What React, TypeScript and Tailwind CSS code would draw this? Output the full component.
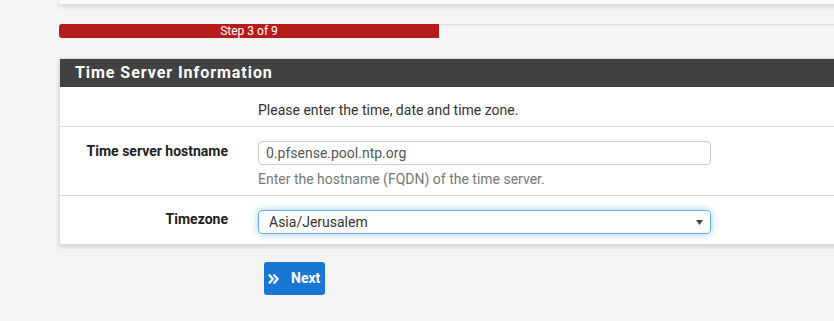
export default function App() {
  return (
    <div className="w-[834px] h-[321px] overflow-hidden bg-[#f4f4f4] font-['Roboto',sans-serif] text-[#333]">
      {/* top panel remnant */}
      <div className="ml-[59px] w-[1140px] h-[4px] bg-[#f9f9f9] shadow-[0_2px_5px_rgba(0,0,0,0.18)]" />

      {/* progress */}
      <div className="ml-[59px] mt-[20px] w-[1140px] h-[14px] rounded-[3px] bg-[#f5f5f5] shadow-[inset_0_1px_2px_rgba(0,0,0,0.1)] overflow-hidden">
        <div className="w-[380px] h-full bg-[#b71c1c] text-white text-[12px] leading-[14px] text-center">
          Step 3 of 9
        </div>
      </div>

      {/* panel */}
      <div className="ml-[59px] mt-[20px] w-[1140px] border border-[#ddd] bg-white shadow-[0_2px_4px_rgba(0,0,0,0.15)]">
        <div className="h-[28px] bg-[#424242] px-[15px] text-white font-bold text-[16px] leading-[28px] tracking-[0.95px]">
          Time Server Information
        </div>

        <div className="flex h-[40px] border-b border-[#ddd]">
          <div className="w-[183px] shrink-0" />
          <div className="ml-[15px] pt-[13px] text-[14px] leading-[20px] text-[#333]">
            Please enter the time, date and time zone.
          </div>
        </div>

        <div className="flex h-[69px] border-b border-[#ddd]">
          <div className="w-[183px] shrink-0 pr-[15px] pt-[14px] text-right text-[14px] leading-[20px] font-bold text-[#212121]">
            Time server hostname
          </div>
          <div className="ml-[15px] pt-[14px]">
            <div className="w-[453px] h-[24px] border border-[#ccc] rounded-[4px] px-[7px] text-[14px] leading-[22px] text-[#555]">
              0.pfsense.pool.ntp.org
            </div>
            <div className="mt-[5px] text-[14px] leading-[18px] text-[#777]">
              Enter the hostname (FQDN) of the time server.
            </div>
          </div>
        </div>

        <div className="flex h-[48px]">
          <div className="w-[183px] shrink-0 pr-[15px] pt-[13px] text-right text-[14px] leading-[20px] font-bold text-[#212121]">
            Timezone
          </div>
          <div className="ml-[15px] pt-[14px]">
            <div className="w-[453px] h-[24px] border border-[#66afe9] rounded-[4px] pl-[10px] pr-[7px] flex items-center justify-between text-[14px] text-[#333] shadow-[0_0_8px_rgba(102,175,233,0.6)]">
              <span>Asia/Jerusalem</span>
              <svg width="7" height="5" viewBox="0 0 7 5" className="mt-[1px]">
                <path d="M0 0 H7 L3.5 5 Z" fill="#444" />
              </svg>
            </div>
          </div>
        </div>
      </div>

      {/* next button */}
      <div className="ml-[264px] mt-[17px]">
        <button className="w-[61px] h-[33px] rounded-[3px] bg-[#1976d2] text-white text-[14px] font-bold flex items-center pl-[4px] gap-[12px]">
          <svg width="11" height="10" viewBox="0 0 11 10" fill="none" stroke="white" strokeWidth="2.2" strokeLinecap="round" strokeLinejoin="round">
            <path d="M1.5 1.2 L5 5 L1.5 8.8" />
            <path d="M6.2 1.2 L9.7 5 L6.2 8.8" />
          </svg>
          <span>Next</span>
        </button>
      </div>
    </div>
  );
}
